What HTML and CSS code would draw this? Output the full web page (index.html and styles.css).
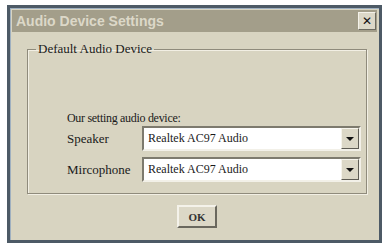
FILE: index.html
```html
<!DOCTYPE html>
<html lang="en">
<head>
    <meta charset="UTF-8">
    <title>Audio Device Settings</title>
    <link rel="stylesheet" href="styles.css">
</head>
<body>
    <div class="window">
        <div class="titlebar">
            <span class="title">Audio Device Settings</span>
            <span class="close">&#x2715;</span>
        </div>
        <div class="content">
            <fieldset class="group">
                <legend>Default Audio Device</legend>
                <div class="caption">Our setting audio device:</div>
                <div class="rows">
                    <span class="label">Speaker</span>
                    <div class="combo">
                        <span class="value">Realtek AC97 Audio</span>
                        <span class="arrow"></span>
                    </div>
                    <span class="label">Mircophone</span>
                    <div class="combo">
                        <span class="value">Realtek AC97 Audio</span>
                        <span class="arrow"></span>
                    </div>
                </div>
            </fieldset>
            <div class="buttons">
                <button class="ok">OK</button>
            </div>
        </div>
    </div>
</body>
</html>
```
FILE: styles.css
```css
body {
    margin: 0;
    background-color: #ffffff;
    font-family: "Liberation Serif", serif;
    color: #1a1a1a;
}
.window {
    box-sizing: border-box;
    width: 375px;
    height: 238px;
    margin: 5px 0 0 7px;
    border: 3px solid #4d5a66;
    box-shadow: inset 1px 1px 0 #9fb0c0;
    padding: 2px;
    background-color: #d8d4c1;
}
.titlebar {
    height: 22px;
    background-color: #a39e8a;
    display: flex;
    align-items: center;
    justify-content: space-between;
    padding: 0 1px 0 4px;
}
.title {
    font-family: "Liberation Sans", Arial, sans-serif;
    font-weight: bold;
    font-size: 14px;
    color: #dcd8c8;
}
.close {
    width: 16px;
    height: 16px;
    background-color: #dcd8c8;
    border: 1px solid #f4f2ea;
    border-right-color: #6c6a60;
    border-bottom-color: #6c6a60;
    font-family: "DejaVu Sans", sans-serif;
    font-weight: bold;
    font-size: 12px;
    line-height: 16px;
    text-align: center;
    color: #111;
}
.content {
    padding: 9px 10px 0 15px;
}
.group {
    margin: 0;
    padding: 54px 5px 11px 39px;
    border: 1px solid #8f8b7c;
    box-shadow: 1px 1px 0 #f2efe4, inset 1px 1px 0 #f2efe4;
    font-size: 13px;
}
.group legend {
    padding: 0 2px;
    margin-left: -31px;
}
.caption {
    font-size: 12px;
    letter-spacing: -0.3px;
    line-height: 14px;
    margin-bottom: 1px;
}
.rows {
    display: grid;
    grid-template-columns: 75px 219px;
    row-gap: 6px;
    align-items: center;
}
.combo {
    box-sizing: border-box;
    height: 25px;
    display: flex;
    align-items: stretch;
    background-color: #ffffff;
    border: 2px solid #7d7a6e;
    border-right-color: #f2f0e8;
    border-bottom-color: #f2f0e8;
}
.value {
    flex: 1;
    padding-left: 4px;
    font-size: 12px;
    line-height: 21px;
}
.arrow {
    box-sizing: border-box;
    width: 18px;
    background-color: #dcd8c7;
    border: 1px solid #f6f4ec;
    border-right-color: #5e5c54;
    border-bottom-color: #5e5c54;
    display: flex;
    align-items: center;
    justify-content: center;
}
.arrow::after {
    content: "";
    border-left: 4px solid transparent;
    border-right: 4px solid transparent;
    border-top: 4px solid #111;
}
.buttons {
    display: flex;
    justify-content: center;
    padding-top: 11px;
}
.ok {
    width: 40px;
    height: 23px;
    background-color: #dcd8c7;
    border: 2px solid #f4f2ea;
    border-right-color: #6a685e;
    border-bottom-color: #6a685e;
    font-family: "Liberation Serif", serif;
    font-weight: bold;
    font-size: 11px;
    color: #333;
    padding: 0;
}
```
